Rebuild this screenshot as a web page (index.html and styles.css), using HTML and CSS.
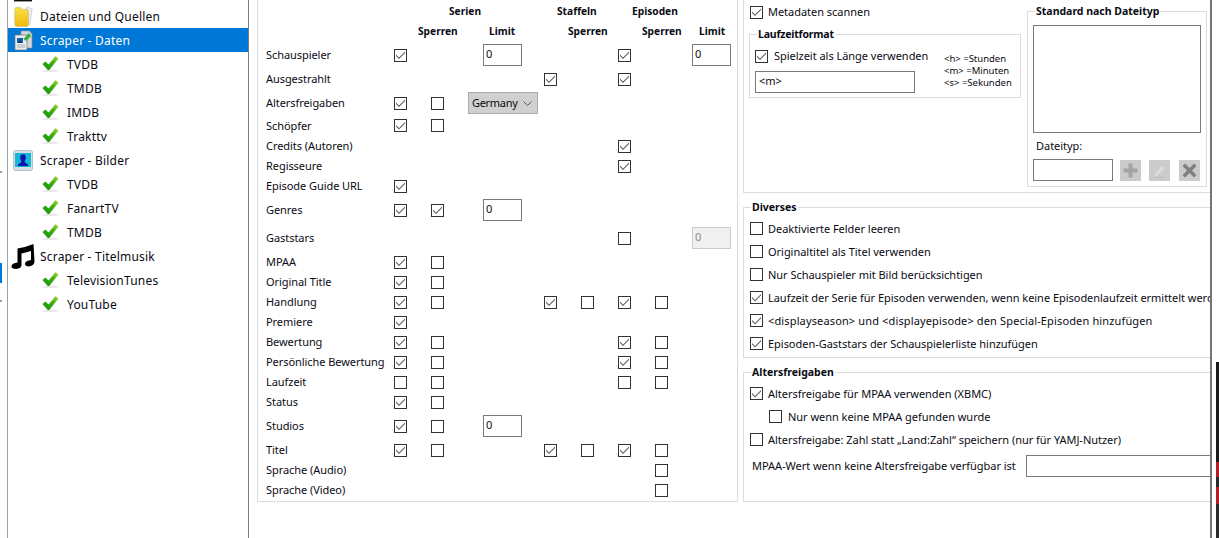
FILE: index.html
```html
<!DOCTYPE html>
<html lang="de">
<head>
<meta charset="utf-8">
<title>Einstellungen</title>
<link rel="stylesheet" href="styles.css">
</head>
<body>
<svg class="defs" width="0" height="0" aria-hidden="true">
  <defs>
    <linearGradient id="gr" x1="0" y1="1" x2="1" y2="0"><stop offset="0" stop-color="#128a0c"/><stop offset=".55" stop-color="#3cae12"/><stop offset="1" stop-color="#a6d636"/></linearGradient>
    <linearGradient id="fold" x1="0" y1="0" x2="0" y2="1"><stop offset="0" stop-color="#fbe04a"/><stop offset="1" stop-color="#eebb08"/></linearGradient>
    <symbol id="tick" viewBox="0 0 17 16">
      <ellipse cx="8.5" cy="14.8" rx="8.5" ry="1.2" fill="#e8e8e8"/>
      <path d="M0.500 8 L3.500 5.500 L6.500 8.500 L13.500 0.300 L16.500 2.500 L7.300 14 L5.800 14 Z" fill="url(#gr)"/>
    </symbol>
  </defs>
</svg>
<div class="app">
  <aside class="side">
    <div class="strip"></div>
    <div class="cut"><span class="cut-icon"></span></div>
    <div class="node">
      <svg class="ico" viewBox="0 0 20 23"><path d="M14 1 L20 3 L17.500 20 L14 20 Z" fill="#eee" stroke="#bbb" stroke-width=".6"/><path d="M1 4 Q1 1.500 3 1.500 L7 1.500 L9 3.500 L14 3.500 Q16 3.500 16 6 L16 20 Q16 22.500 14 22.500 L3 22.500 Q1 22.500 1 20 Z" fill="url(#fold)" stroke="#c9bd90" stroke-width=".8"/></svg>
      <span>Dateien und Quellen</span>
    </div>
    <div class="node sel">
      <svg class="ico" viewBox="0 0 20 21"><path d="M8 1 L16.500 1 L19 4 L19 18 L8 18 Z" fill="#d3d8dc" stroke="#8b9298" stroke-width=".6"/><path d="M2 5 L14 5 L14 20 L2 20 Z" fill="#e9ebed" stroke="#6f7880" stroke-width=".7"/><rect x="4" y="8" width="6" height="5" fill="#1f5fae"/><path d="M5 13 L7 9.500 L9 13 Z" fill="#143a78"/><path d="M4 15h8M4 17h8" stroke="#9aa2a8" stroke-width=".8"/><path d="M10.500 9 L16 3 L18 6 L13 11 Z" fill="#32b03a"/></svg>
      <span>Scraper - Daten</span>
    </div>
    <div class="leaf"><svg class="tick"><use href="#tick"/></svg><span>TVDB</span></div>
    <div class="leaf"><svg class="tick"><use href="#tick"/></svg><span>TMDB</span></div>
    <div class="leaf"><svg class="tick"><use href="#tick"/></svg><span>IMDB</span></div>
    <div class="leaf"><svg class="tick"><use href="#tick"/></svg><span>Trakttv</span></div>
    <div class="node">
      <svg class="ico" viewBox="0 0 20 21"><rect x=".5" y=".5" width="19" height="20" rx="2" fill="#d5dee3" stroke="#b5bfc4"/><rect x="2" y="3" width="16" height="14" fill="#12b6d6"/><path d="M8 4.500 L12 4.500 L13 8 L12 10.500 L11.500 12 L15 14.500 L15 16 L5 16 L5 14.500 L8.500 12 L8 10.500 L7 8 Z" fill="#0a14a8"/></svg>
      <span>Scraper - Bilder</span>
    </div>
    <div class="leaf"><svg class="tick"><use href="#tick"/></svg><span>TVDB</span></div>
    <div class="leaf"><svg class="tick"><use href="#tick"/></svg><span>FanartTV</span></div>
    <div class="leaf"><svg class="tick"><use href="#tick"/></svg><span>TMDB</span></div>
    <div class="node">
      <svg class="ico music" viewBox="0 0 24 25"><path d="M6.500 4.500 Q14 3.500 22.500 0 L23.500 17.500 Q23.500 21.500 18 22.500 Q13.500 22.500 14 19.500 Q14.500 16.500 20 16 L20 7 Q14 8.500 10.500 9.500 L10.500 21 Q10.500 24.500 5 25 Q0 25 .5 22 Q1 19 6.500 18.500 Z" fill="#000"/></svg>
      <span>Scraper - Titelmusik</span>
    </div>
    <div class="leaf"><svg class="tick"><use href="#tick"/></svg><span>TelevisionTunes</span></div>
    <div class="leaf"><svg class="tick"><use href="#tick"/></svg><span>YouTube</span></div>
  </aside>

  <main class="content">
    <section class="fields">
      <div class="row r-h1">
        <b class="c2 h-serien">Serien</b><b class="c5 h-staffeln">Staffeln</b><b class="c7 h-episoden">Episoden</b>
      </div>
      <div class="row r-h2">
        <b class="c3 h-sperren">Sperren</b><b class="c4 h-limit">Limit</b><b class="c6 h-sperren">Sperren</b><b class="c8 h-sperren">Sperren</b><b class="c9 h-limit2">Limit</b>
      </div>
      <div class="row r24"><label>Schauspieler</label><input class="cb c2" type="checkbox" checked><input class="num c4" value="0"><input class="cb c7" type="checkbox" checked><input class="num c9" value="0"></div>
      <div class="row r24"><label>Ausgestrahlt</label><input class="cb c5" type="checkbox" checked><input class="cb c7" type="checkbox" checked></div>
      <div class="row r24"><label>Altersfreigaben</label><input class="cb c2" type="checkbox" checked><input class="cb c3" type="checkbox"><div class="select c4"><span>Germany</span><svg width="9" height="5" viewBox="0 0 9 5"><path d="M.5 .5 L4.500 4.500 L8.500 .5" fill="none" stroke="#555"/></svg></div></div>
      <div class="row r21"><label>Schöpfer</label><input class="cb c2" type="checkbox" checked><input class="cb c3" type="checkbox"></div>
      <div class="row r20"><label>Credits (Autoren)</label><input class="cb c7" type="checkbox" checked></div>
      <div class="row r20"><label>Regisseure</label><input class="cb c7" type="checkbox" checked></div>
      <div class="row r20"><label>Episode Guide URL</label><input class="cb c2" type="checkbox" checked></div>
      <div class="row r28"><label>Genres</label><input class="cb c2" type="checkbox" checked><input class="cb c3" type="checkbox" checked><input class="num c4" value="0"></div>
      <div class="row r28"><label>Gaststars</label><input class="cb c7" type="checkbox"><input class="num c9" value="0" disabled></div>
      <div class="row r20"><label>MPAA</label><input class="cb c2" type="checkbox" checked><input class="cb c3" type="checkbox"></div>
      <div class="row r20"><label>Original Title</label><input class="cb c2" type="checkbox" checked><input class="cb c3" type="checkbox"></div>
      <div class="row r20"><label>Handlung</label><input class="cb c2" type="checkbox" checked><input class="cb c3" type="checkbox"><input class="cb c5" type="checkbox" checked><input class="cb c6" type="checkbox"><input class="cb c7" type="checkbox" checked><input class="cb c8" type="checkbox"></div>
      <div class="row r20"><label>Premiere</label><input class="cb c2" type="checkbox" checked></div>
      <div class="row r20"><label>Bewertung</label><input class="cb c2" type="checkbox" checked><input class="cb c3" type="checkbox"><input class="cb c7" type="checkbox" checked><input class="cb c8" type="checkbox"></div>
      <div class="row r20"><label>Persönliche Bewertung</label><input class="cb c2" type="checkbox" checked><input class="cb c3" type="checkbox"><input class="cb c7" type="checkbox" checked><input class="cb c8" type="checkbox"></div>
      <div class="row r20"><label>Laufzeit</label><input class="cb c2" type="checkbox"><input class="cb c3" type="checkbox"><input class="cb c7" type="checkbox"><input class="cb c8" type="checkbox"></div>
      <div class="row r20"><label>Status</label><input class="cb c2" type="checkbox" checked><input class="cb c3" type="checkbox"></div>
      <div class="row r28"><label>Studios</label><input class="cb c2" type="checkbox" checked><input class="cb c3" type="checkbox"><input class="num c4" value="0"></div>
      <div class="row r20"><label>Titel</label><input class="cb c2" type="checkbox" checked><input class="cb c3" type="checkbox"><input class="cb c5" type="checkbox" checked><input class="cb c6" type="checkbox"><input class="cb c7" type="checkbox" checked><input class="cb c8" type="checkbox"></div>
      <div class="row r20"><label>Sprache (Audio)</label><input class="cb c8" type="checkbox"></div>
      <div class="row r20"><label>Sprache (Video)</label><input class="cb c8" type="checkbox"></div>
    </section>

    <div class="right">
      <section class="top">
        <div class="top-left">
          <div class="opt meta"><input class="cb" type="checkbox" checked><span>Metadaten scannen</span></div>
          <fieldset class="runtime">
            <legend>Laufzeitformat</legend>
            <div class="runtime-left">
              <div class="opt"><input class="cb" type="checkbox" checked><span>Spielzeit als Länge verwenden</span></div>
              <input class="text fmt" value="&lt;m&gt;">
            </div>
            <div class="legend-list"><div>&lt;h&gt; =Stunden</div><div>&lt;m&gt; =Minuten</div><div>&lt;s&gt; =Sekunden</div></div>
          </fieldset>
        </div>
        <fieldset class="bytype">
          <legend>Standard nach Dateityp</legend>
          <div class="listbox"></div>
          <div class="ft-label">Dateityp:</div>
          <div class="ft-row">
            <input class="text ft">
            <button class="tool" type="button" aria-label="Hinzufügen"><svg width="15" height="15" viewBox="0 0 15 15"><path d="M5.500 0.500h4v5h5v4h-5v5h-4v-5h-5v-4h5z" fill="#a4a4a4"/></svg></button>
            <button class="tool" type="button" aria-label="Bearbeiten"><svg width="15" height="15" viewBox="0 0 15 15"><path d="M3 10.500 L10 3 L12.500 5.500 L5 12.500 L3 13 Z" fill="#dcdcdc"/><path d="M2 14.500h11" stroke="#bcbcbc"/></svg></button>
            <button class="tool last" type="button" aria-label="Löschen"><svg width="15" height="15" viewBox="0 0 15 15"><path d="M3 .5 L7.500 5 L12 .5 L14.500 3 L10 7.500 L14.500 12 L12 14.500 L7.500 10 L3 14.500 L.5 12 L5 7.500 L.5 3 Z" fill="#808080"/></svg></button>
          </div>
        </fieldset>
      </section>

      <fieldset class="group misc">
        <legend>Diverses</legend>
        <div class="opt"><input class="cb" type="checkbox"><span>Deaktivierte Felder leeren</span></div>
        <div class="opt"><input class="cb" type="checkbox"><span>Originaltitel als Titel verwenden</span></div>
        <div class="opt"><input class="cb" type="checkbox"><span>Nur Schauspieler mit Bild berücksichtigen</span></div>
        <div class="opt"><input class="cb" type="checkbox" checked><span>Laufzeit der Serie für Episoden verwenden, wenn keine Episodenlaufzeit ermittelt werden kann</span></div>
        <div class="opt wide"><input class="cb" type="checkbox" checked><span>&lt;displayseason&gt; und &lt;displayepisode&gt; den Special-Episoden hinzufügen</span></div>
        <div class="opt"><input class="cb" type="checkbox" checked><span>Episoden-Gaststars der Schauspielerliste hinzufügen</span></div>
      </fieldset>

      <fieldset class="group rating">
        <legend>Altersfreigaben</legend>
        <div class="opt"><input class="cb" type="checkbox" checked><span>Altersfreigabe für MPAA verwenden (XBMC)</span></div>
        <div class="opt sub"><input class="cb" type="checkbox"><span>Nur wenn keine MPAA gefunden wurde</span></div>
        <div class="opt"><input class="cb" type="checkbox"><span>Altersfreigabe: Zahl statt „Land:Zahl“ speichern (nur für YAMJ-Nutzer)</span></div>
        <div class="mpaa"><span>MPAA-Wert wenn keine Altersfreigabe verfügbar ist</span><input class="text mpaa-in"></div>
      </fieldset>
    </div>
  </main>
  <div class="edge"><div class="edge-strip"></div></div>
</div>
</body>
</html>
```
FILE: styles.css
```css
* { box-sizing: border-box; }
html, body { margin: 0; height: 100%; background: #fff; overflow: hidden; }
body { font: 11px/16px "Noto Sans", "Open Sans", sans-serif; color: #0a0a14; }
.defs { position: absolute; }
.app { display: flex; width: 1219px; height: 538px; }

/* tree */
.side { width: 250px; flex: none; height: 538px; padding-left: 8px; font-size: 12px; letter-spacing: .2px; position: relative; }
.side::before { content: ""; position: absolute; left: 7px; top: 0; bottom: 0; width: 1px; background: #a0a0a0; }
.side::after { content: ""; position: absolute; left: 248px; top: 0; bottom: 0; width: 1px; background: #7e7e7e; }
.strip { position: absolute; left: 0; top: 0; width: 2px; height: 538px; background: linear-gradient(#fff 171px, #999 171px, #999 173px, #fff 173px, #fff 263px, #0078d7 263px, #0078d7 283px, #fff 283px, #fff 300px, #999 300px, #999 302px, #fff 302px); }
.cut { height: 4px; padding: 0 0 0 6px; overflow: hidden; }
.cut-icon { display: block; width: 18px; height: 2px; background: #111; border-bottom: 1px solid #999; }
.node, .leaf { display: flex; align-items: center; height: 24px; width: 240px; white-space: nowrap; }
.node { padding-left: 5px; position: relative; }
.node span { position: absolute; left: 32px; top: 5px; }
.sel { background: #0078d7; color: #fff; }
.ico { width: 20px; height: 21px; flex: none; }
.music { width: 24px; height: 25px; margin-left: -2px; }
.leaf { padding-left: 34px; }
.leaf span { padding-top: 2px; }
.tick { width: 17px; height: 16px; flex: none; margin-right: 8px; }

/* field grid */
.content { display: flex; flex: none; width: 960px; height: 538px; padding-left: 7px; gap: 5px; overflow: hidden; }
.fields { width: 481px; height: 502px; flex: none; padding: 0 0 0 8px; border: 1px solid #dcdcdc; border-top: 0; }
.row { display: grid; grid-template-columns: 128px 37px 37px 76px 37px 37px 37px 37px 39px; align-items: center; }
.row label { grid-column: 1; letter-spacing: -.06px; white-space: nowrap; }
.r-h1 { height: 21px; } .r-h2 { height: 22px; align-items: start; padding-top: 2px; }
.r20 { height: 20px; } .r21 { height: 21px; } .r24 { height: 24px; } .r28 { height: 28px; }
.c2 { grid-column: 2; } .c3 { grid-column: 3; } .c4 { grid-column: 4; } .c5 { grid-column: 5; }
.c6 { grid-column: 6; } .c7 { grid-column: 7; } .c8 { grid-column: 8; } .c9 { grid-column: 9; }
b { font-weight: 700; font-size: 10.2px; white-space: nowrap; }
.row b { justify-self: start; }
.h-serien { margin-left: 55px; }
.h-staffeln { margin-left: 13px; }
.h-episoden { margin-left: 14px; }
.h-sperren { margin-left: -13px; }
.h-limit { margin-left: 21px; }
.h-limit2 { margin-left: 7px; }

.cb { appearance: none; -webkit-appearance: none; display: block; width: 13px; height: 13px; margin: 0; flex: none; border: 1px solid #333; background: #fff; justify-self: start; }
.cb:checked::after { content: ""; display: block; width: 11px; height: 11px; background: #606060; clip-path: polygon(1px 5px, 4px 8px, 10px 2px, 10px 3.4px, 4px 9.4px, 1px 6.4px); }

input.num, input.text { font: inherit; color: #0a0a14; border: 1px solid #7a7a7a; background: #fff; padding: 0 2px; margin: 0; border-radius: 0; outline: 0; height: 22px; }
input.num { width: 39px; justify-self: start; padding-bottom: 3px; }
.c4.num { margin-left: 15px; }
input.num:disabled { background: #f0f0f0; border-color: #ccc; color: #8a8a8a; }
.select { display: flex; align-items: center; justify-content: space-between; width: 70px; height: 22px; padding: 0 5px 0 3px; background: #d0d0d0; border: 1px solid #adadad; letter-spacing: -.3px; }

/* right column */
.right { width: 467px; flex: none; display: flex; flex-direction: column; overflow: hidden; }
.opt { display: flex; align-items: center; height: 23px; padding-left: 6px; gap: 5px; white-space: nowrap; letter-spacing: -.03px; }
.opt.wide { letter-spacing: .14px; }
.top { display: flex; flex: none; width: 480px; height: 193px; padding: 4px 0 0 5px; border: 1px solid #dcdcdc; border-width: 0 0 1px 1px; gap: 6px; }
.top-left { width: 272px; flex: none; }
.opt.meta { height: 16px; padding-left: 1px; }
fieldset { margin: 0; padding: 0; min-width: 0; border: 1px solid #dcdcdc; }
legend { font-weight: 700; font-size: 10.5px; line-height: 15px; padding: 0 1px; margin-left: 7px; white-space: nowrap; }
.runtime { margin-top: 7px; height: 71px; padding: 6px 0 0 5px; }
.runtime legend { margin-left: 2px; letter-spacing: -.2px; }
.runtime-left { float: left; width: 189px; }
.runtime .opt { height: 16px; padding-left: 0; gap: 6px; }
input.fmt { display: block; width: 160px; margin-top: 7px; padding: 0 3px 3px; }
.legend-list { font-size: 9.5px; line-height: 12px; padding-top: 5px; white-space: nowrap; }
.bytype { width: 180px; height: 183px; padding: 6px 0 0 5px; }
.bytype legend { margin-left: 2px; }
.listbox { width: 168px; height: 108px; border: 1px solid #7a7a7a; }
.ft-label { margin: 5px 0; padding-left: 3px; letter-spacing: -.03px; }
.ft-row { display: flex; align-items: flex-end; gap: 8px; height: 22px; }
input.ft { width: 80px; margin-right: -1px; }
.tool { width: 21px; height: 21px; padding: 0; background: #cbcbcb; border: 0; display: flex; align-items: center; justify-content: center; }
.tool.last { margin-left: 1px; }
.group { width: 480px; flex: none; }
.misc { margin-top: 7px; height: 158px; padding-top: 2px; }
.rating { margin-top: 7px; height: 137px; padding-top: 2px; }
.opt.sub { padding-left: 25px; gap: 6px; }
.mpaa { display: flex; align-items: center; height: 22px; margin-top: 4px; padding-left: 8px; letter-spacing: -.03px; white-space: nowrap; }
.mpaa span { width: 274px; flex: none; }
input.mpaa-in { width: 190px; }

/* window edge */
.edge { flex: none; width: 9px; height: 538px; border-left: 2px solid #757575; padding-left: 4px; }
.edge-strip { width: 3px; height: 176px; margin-top: 362px; background: linear-gradient(#1a1a1a 100px, #b02028 100px, #b02028 115px, #2a2a2a 115px, #2a2a2a 125px, #b02028 125px, #b02028 142px, #2a2a2a 142px); }
```
